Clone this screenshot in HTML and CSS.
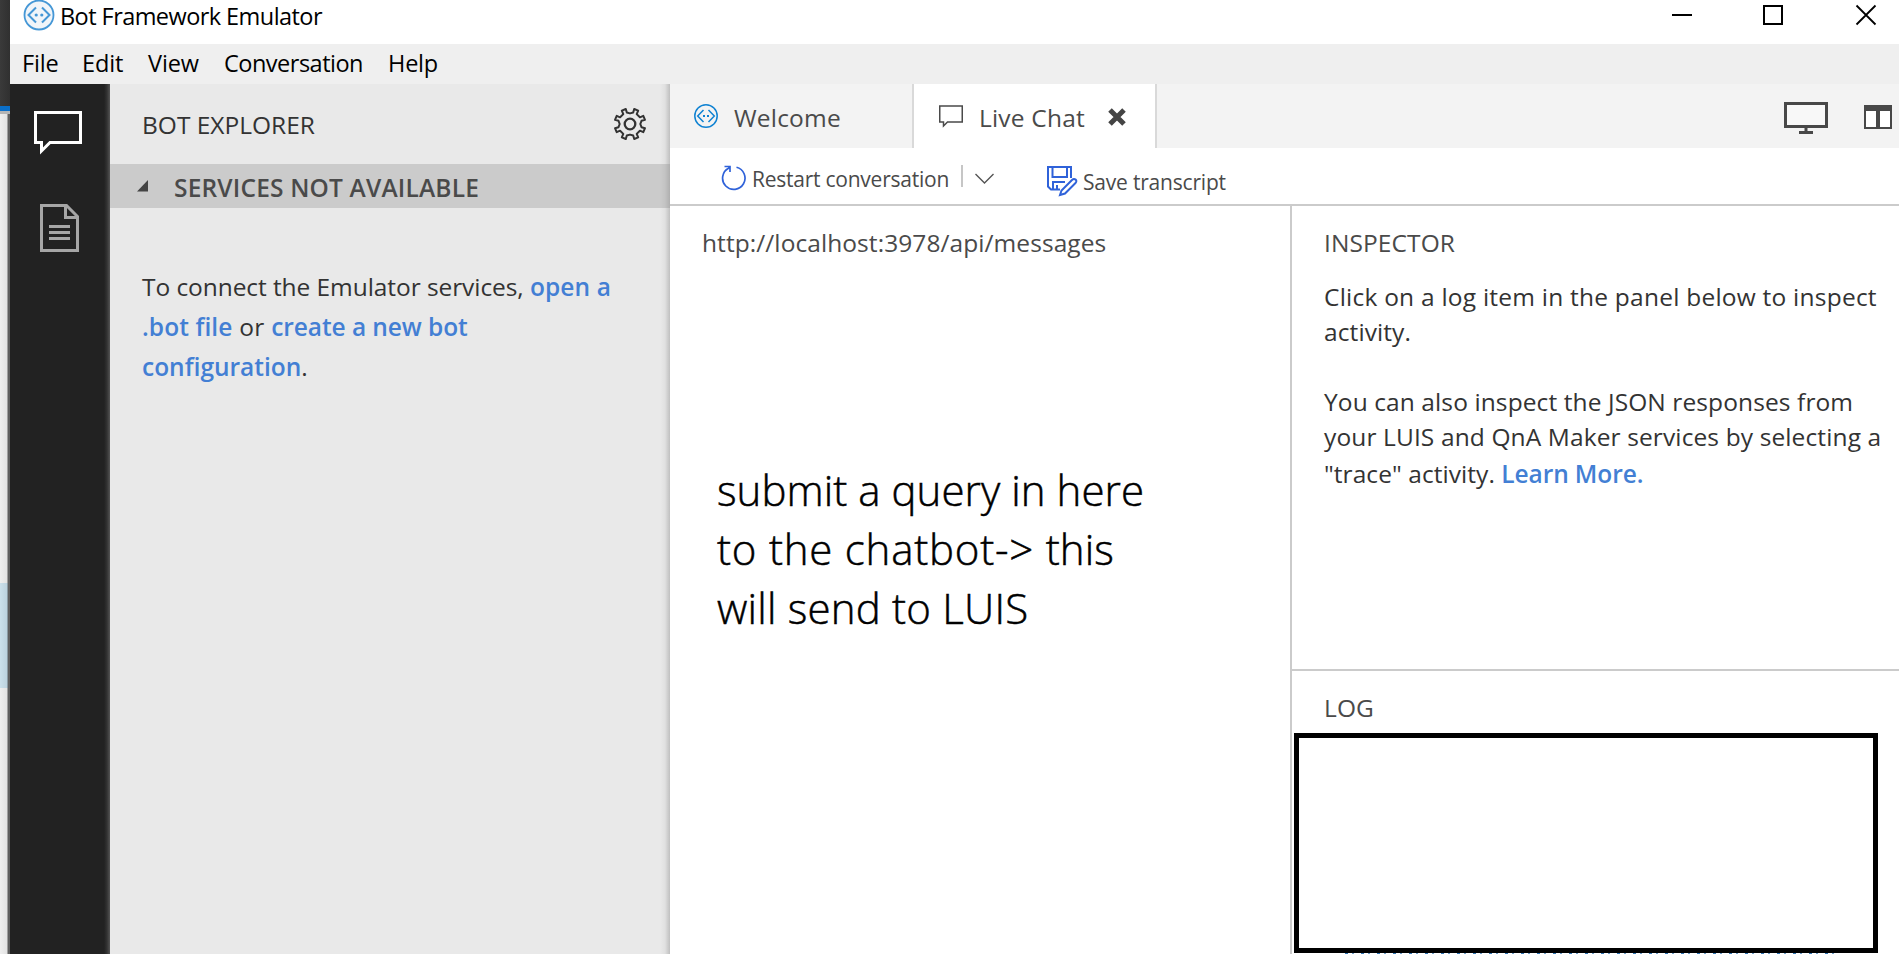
FILE: index.html
```
<!DOCTYPE html>
<html lang="en">
<head>
<meta charset="utf-8">
<title>Bot Framework Emulator</title>
<link rel="stylesheet" href="styles.css">
</head>
<body>
<div class="desktop">
  <div class="behind"><div class="behind-dark"></div><div class="behind-blue"></div><div class="behind-page"><div class="behind-sel"></div></div></div>
  <div class="window">
    <header class="titlebar">
      <svg class="logo" width="32" height="32" viewBox="0 0 32 32" fill="none" stroke="#4597d6"><circle cx="16" cy="15" r="14.500" fill="#f1f5f9" stroke-width="1.800"/><path d="M13 7.500L5.500 15L13 22.500M19 7.500L26.500 15L19 22.500" stroke-width="2"/><circle cx="13.200" cy="15" r="1.600" fill="#4597d6" stroke="none"/><circle cx="18.800" cy="15" r="1.600" fill="#4597d6" stroke="none"/></svg>
      <span class="app-name">Bot Framework Emulator</span>
      <svg class="controls" width="208" height="30" viewBox="0 0 208 30" fill="none" stroke="#000" stroke-width="2"><path d="M1 15H21"/><rect x="93" y="6" width="18" height="18"/><path d="M185.500 5.500L204.500 24.500M204.500 5.500L185.500 24.500" stroke-width="1.800"/></svg>
    </header>
    <nav class="menubar">
      <span class="m1">File</span><span class="m2">Edit</span><span class="m3">View</span><span class="m4">Conversation</span><span class="m5">Help</span>
    </nav>
    <div class="workspace">
      <aside class="rail">
        <svg width="48" height="44" viewBox="0 0 48 44" fill="none" stroke="#fff" stroke-width="3"><path d="M1.500 1.500H46.500V31.500H16L7.500 40V31.500H1.500Z"/></svg>
        <svg class="doc" width="40" height="48" viewBox="0 0 40 48" fill="none" stroke="#a6a6a6" stroke-width="3"><path d="M1.500 1.500H26.500L37.500 12.500V46.500H1.500ZM25.500 1.500V13.500H37.500M9 22.500H30M9 28.500H30M9 34.500H30"/></svg>
      </aside>
      <section class="explorer">
        <div class="explorer-head"><span class="t-exp">BOT EXPLORER</span>
          <svg width="34" height="34" viewBox="0 0 34 34" fill="none" stroke="#333" stroke-width="2" stroke-linejoin="round"><circle cx="17" cy="17" r="5.300" stroke-width="2.300"/><path d="M13.800 5.500L12.800 2L8.800 3.700L10.300 7.100L7.100 10.300L3.700 8.800L2 12.800L5.500 13.800L6.700 17L5.500 20.200L2 21.200L3.700 25.200L7.100 23.700L10.300 26.900L8.800 30.300L12.800 32L13.800 28.500L17 27.600L20.200 28.500L21.200 32L25.200 30.300L23.700 26.900L26.900 23.700L30.300 25.200L32 21.200L28.500 20.200L27.300 17L28.500 13.800L32 12.800L30.300 8.800L26.900 10.300L23.700 7.100L25.200 3.700L21.200 2L20.200 5.500L17 6.400Z"/></svg>
        </div>
        <div class="services"><svg width="12" height="12" viewBox="0 0 12 12"><path d="M0 11.500L11 0V11.500Z" fill="#444"/></svg><span class="t-srv">SERVICES NOT AVAILABLE</span></div>
        <div class="connect">
          <div><span class="c1">To connect the Emulator services, </span><a class="c2">open a</a></div>
          <div><a class="c3">.bot file</a><span class="c4">&nbsp;or&nbsp;</span><a class="c5">create a new bot</a></div>
          <div><a class="c6">configuration</a><span>.</span></div>
        </div>
      </section>
      <main class="editor">
        <div class="tabs">
          <div class="tab welcome"><svg width="24" height="24" viewBox="0 0 24 24" fill="none" stroke="#0f82d2"><circle cx="12" cy="12" r="11.200" stroke-width="1.500"/><path d="M9.500 6L3.700 12L9.500 18M14.500 6L20.300 12L14.500 18" stroke-width="1.500"/><path d="M9 12H11M13 12H15" stroke-width="1.800"/></svg><span class="t-wel">Welcome</span></div>
          <div class="tab chat"><svg width="24" height="23" viewBox="0 0 24 23" fill="none" stroke="#4a4a4a" stroke-width="1.500"><path d="M.750 1H23.250V17H8.500L4.500 21V17H.750Z"/></svg><span class="t-chat">Live Chat</span><svg class="close" width="18" height="18" viewBox="0 0 18 18"><path d="M2 2L16 16M16 2L2 16" stroke="#444" stroke-width="5"/></svg></div>
          <svg class="layout-icons" width="108" height="34" viewBox="0 0 108 34" fill="none" stroke="#484848"><rect x="1.500" y="1.500" width="41" height="23" fill="#f8f8f8" stroke-width="3"/><path d="M22 25V29M15 30.500H29" stroke-width="3"/><rect x="81" y="4" width="26" height="22" fill="#fff" stroke-width="2"/><path d="M80 6H108" stroke-width="6"/><path d="M94 6V27" stroke-width="4"/></svg>
        </div>
        <div class="toolbar">
          <svg class="restart" width="26" height="26" viewBox="0 0 26 26" fill="none" stroke="#2f62d9" stroke-width="1.700"><path d="M15.500 2.300A11.200 11.200 0 1 1 7.500 3.300L9 2M3.500 1.500H9V7"/></svg>
          <span class="t-res">Restart conversation</span>
          <i class="sep"></i>
          <svg class="chev" width="19" height="12" viewBox="0 0 19 12" fill="none" stroke="#555" stroke-width="1.400"><path d="M.500 1L9.500 10L18.500 1"/></svg>
          <svg class="save" width="31" height="31" viewBox="0 0 31 31" fill="none" stroke="#2f62d9" stroke-width="2"><path d="M13 23.500H4L1 20.500V1H24V12M5.500 1V11H20V1M6 23V16H18M10 23V19"/><path d="M13 29L14.500 24.500L25 14C27.500 11.500 31 14.500 28.500 17L18 27.500Z" fill="#fff"/></svg>
          <span class="t-save">Save transcript</span>
        </div>
        <div class="panes">
          <section class="conversation">
            <div class="t-url">http://localhost:3978/api/messages</div>
            <div class="note"><div><span class="n1">submit a query in here</span></div><div><span class="n2">to the chatbot-&gt; </span><span class="n2b">this</span></div><div><span class="n3">will send to LUIS</span></div></div>
          </section>
          <div class="side">
            <section class="inspector">
              <div class="heading"><span class="t-ins">INSPECTOR</span></div>
              <p><span class="i1">Click on a log item in the panel below to inspect</span><br><span class="i2">activity.</span></p>
              <p><span class="i3">You can also inspect the JSON responses from</span><br><span class="i4">your LUIS and QnA Maker services by selecting a</span></p>
              <div class="last-line"><span class="i5">"trace" activity. </span><a class="i6">Learn More.</a></div>
            </section>
            <section class="log"><div class="heading"><span class="t-log">LOG</span></div><div class="log-box"></div><div class="log-rest"></div></section>
          </div>
        </div>
      </main>
    </div>
  </div>
</div>
</body>
</html>
```
FILE: styles.css
```
* { box-sizing: border-box; }
body { margin: 0; font-family: "Open Sans", "Noto Sans", sans-serif; font-size: 24.5px; color: #333; background: #fff; }
svg { display: block; flex: none; }
span, a { white-space: pre; }
.desktop { display: flex; width: 1899px; height: 954px; overflow: hidden; }

/* Sliver of the window behind */
.behind { width: 10px; display: flex; flex-direction: column; }
.behind-dark { height: 106px; background: linear-gradient(90deg, #3a3a3a, #303030); }
.behind-blue { height: 5px; background: #0a6fc9; }
.behind-page { flex: 1; background: linear-gradient(90deg, #efefef 0, #e3e3e3 7px, #a0a0a0 7px, #a0a0a0 8px, #5e5e5e 8px); border-top: 3px solid #b5b5b5; padding-top: 469px; }
.behind-sel { width: 8px; height: 105px; background: linear-gradient(90deg, #cbe0eb, #bcd2de 7px, #8b9ba4 7px); }

/* Title bar and menu */
.window { flex: 1; display: flex; flex-direction: column; min-width: 0; }
.titlebar { height: 44px; display: flex; background: #fff; color: #000; font-size: 23.5px; }
.logo { margin: 0 5px 0 13px; }
.app-name { line-height: 32px; flex: 1; letter-spacing: -.56px; }
.controls { margin-right: 20px; }
.menubar { height: 40px; background: #efefef; color: #000; display: flex; line-height: 39px; padding-left: 12px; font-size: 23.5px; }
.menubar span { flex: none; }
.m1 { width: 60px; letter-spacing: -.2px; }
.m2 { width: 66px; letter-spacing: -.15px; }
.m3 { width: 76px; letter-spacing: -.1px; }
.m4 { width: 164px; letter-spacing: -.5px; }
.m5 { letter-spacing: -.2px; }
.workspace { flex: 1; display: flex; min-height: 0; }

/* Activity rail */
.rail { width: 100px; padding: 27px 0 0 24px; background: linear-gradient(90deg, #222 94px, #333 97px, #555 100px); }
.doc { margin: 49px 0 0 6px; }

/* Explorer */
.explorer { width: 560px; background: linear-gradient(90deg, transparent 550px, rgba(0,0,0,.04) 555px, rgba(0,0,0,.18)), #e9e9e9; }
.explorer-head { height: 80px; display: flex; justify-content: space-between; padding: 23px 23px 0 32px; line-height: 35px; }
.t-exp { letter-spacing: 0; }
.services { height: 44px; display: flex; align-items: center; padding-left: 27px; gap: 25px; font-weight: 600; color: #4a4a4a; background: linear-gradient(90deg, transparent 550px, rgba(0,0,0,.04) 555px, rgba(0,0,0,.14)), #cbcbcb; }
.t-srv { letter-spacing: .18px; padding-top: 3px; }
.connect { padding: 59px 0 0 32px; line-height: 40px; }
.connect div { white-space: nowrap; }
.c1 { letter-spacing: -.07px; }
.c2, .c3 { letter-spacing: .1px; }
.c4 { letter-spacing: .3px; }
.c5 { letter-spacing: -.08px; }
a { color: #437fd4; font-weight: 600; }

/* Editor */
.editor { flex: 1; display: flex; flex-direction: column; min-width: 0; background: #fff; color: #4a4a4a; }
.tabs { height: 64px; background: #f3f3f3; display: flex; }
.tab { display: flex; line-height: 67px; letter-spacing: .2px; }
.tab svg { margin-top: 20px; }
.chat svg { margin-top: 21px; }
.welcome { width: 242px; padding-left: 24px; gap: 16px; }
.chat { width: 245px; border: solid #d9d9d9; border-width: 0 2px; background: #fff; padding-left: 25px; gap: 16px; }
.chat .close { margin: 24px 0 0 7px; }
.layout-icons { margin: 18px 7px 0 auto; }
.toolbar { height: 58px; border-bottom: 2px solid #cbcbcb; display: flex; font-size: 21px; padding-left: 51px; }
.restart { margin: 17px 5px 0 0; }
.t-res { line-height: 62px; width: 209px; letter-spacing: -.24px; }
.sep { width: 2px; height: 22px; background: #c6c6c6; margin-top: 17px; }
.chev { margin: 25px 53px 0 12px; }
.save { margin-top: 18px; }
.t-save { line-height: 68px; margin-left: 5px; letter-spacing: -.2px; }
.panes { flex: 1; display: flex; min-height: 0; }
.conversation { width: 620px; padding: 17px 0 0 32px; line-height: 40px; }
.t-url { letter-spacing: .07px; }
.note { color: #000; font-size: 42px; font-weight: 300; -webkit-text-stroke: .5px #000; line-height: 59px; padding: 197px 0 0 15px; white-space: nowrap; }
.n1 { letter-spacing: .05px; }
.n2 { letter-spacing: .78px; }
.n2b { letter-spacing: 0; }
.n3 { letter-spacing: .2px; }
.side { flex: 1; min-width: 0; border-left: 2px solid #cbcbcb; }

/* Inspector and log */
.inspector { height: 463px; padding: 17px 0 0 32px; line-height: 35px; color: #333; }
.heading { line-height: 40px; color: #4a4a4a; letter-spacing: .1px; }
p { margin: 0; padding-top: 16px; white-space: nowrap; }
p + p { padding-top: 35px; }
.last-line { padding-top: 2px; white-space: nowrap; }
.i1 { letter-spacing: .23px; }
.i2, .i3 { letter-spacing: .1px; }
.i4 { letter-spacing: .12px; }
.i5 { letter-spacing: .06px; }
.i6 { letter-spacing: -.1px; }
.log { border-top: 2px solid #cbcbcb; }
.log .heading { padding: 17px 0 0 32px; height: 62px; }
.log-box { width: 584px; height: 220px; margin-left: 2px; border: 5px solid #000; }
.log-rest { height: 1px; width: 490px; margin-left: 53px; background: repeating-linear-gradient(90deg, #3276b5 0 3px, #fff 3px 7px, #6d9dca 7px 9px, #fff 9px 16px); }
```
